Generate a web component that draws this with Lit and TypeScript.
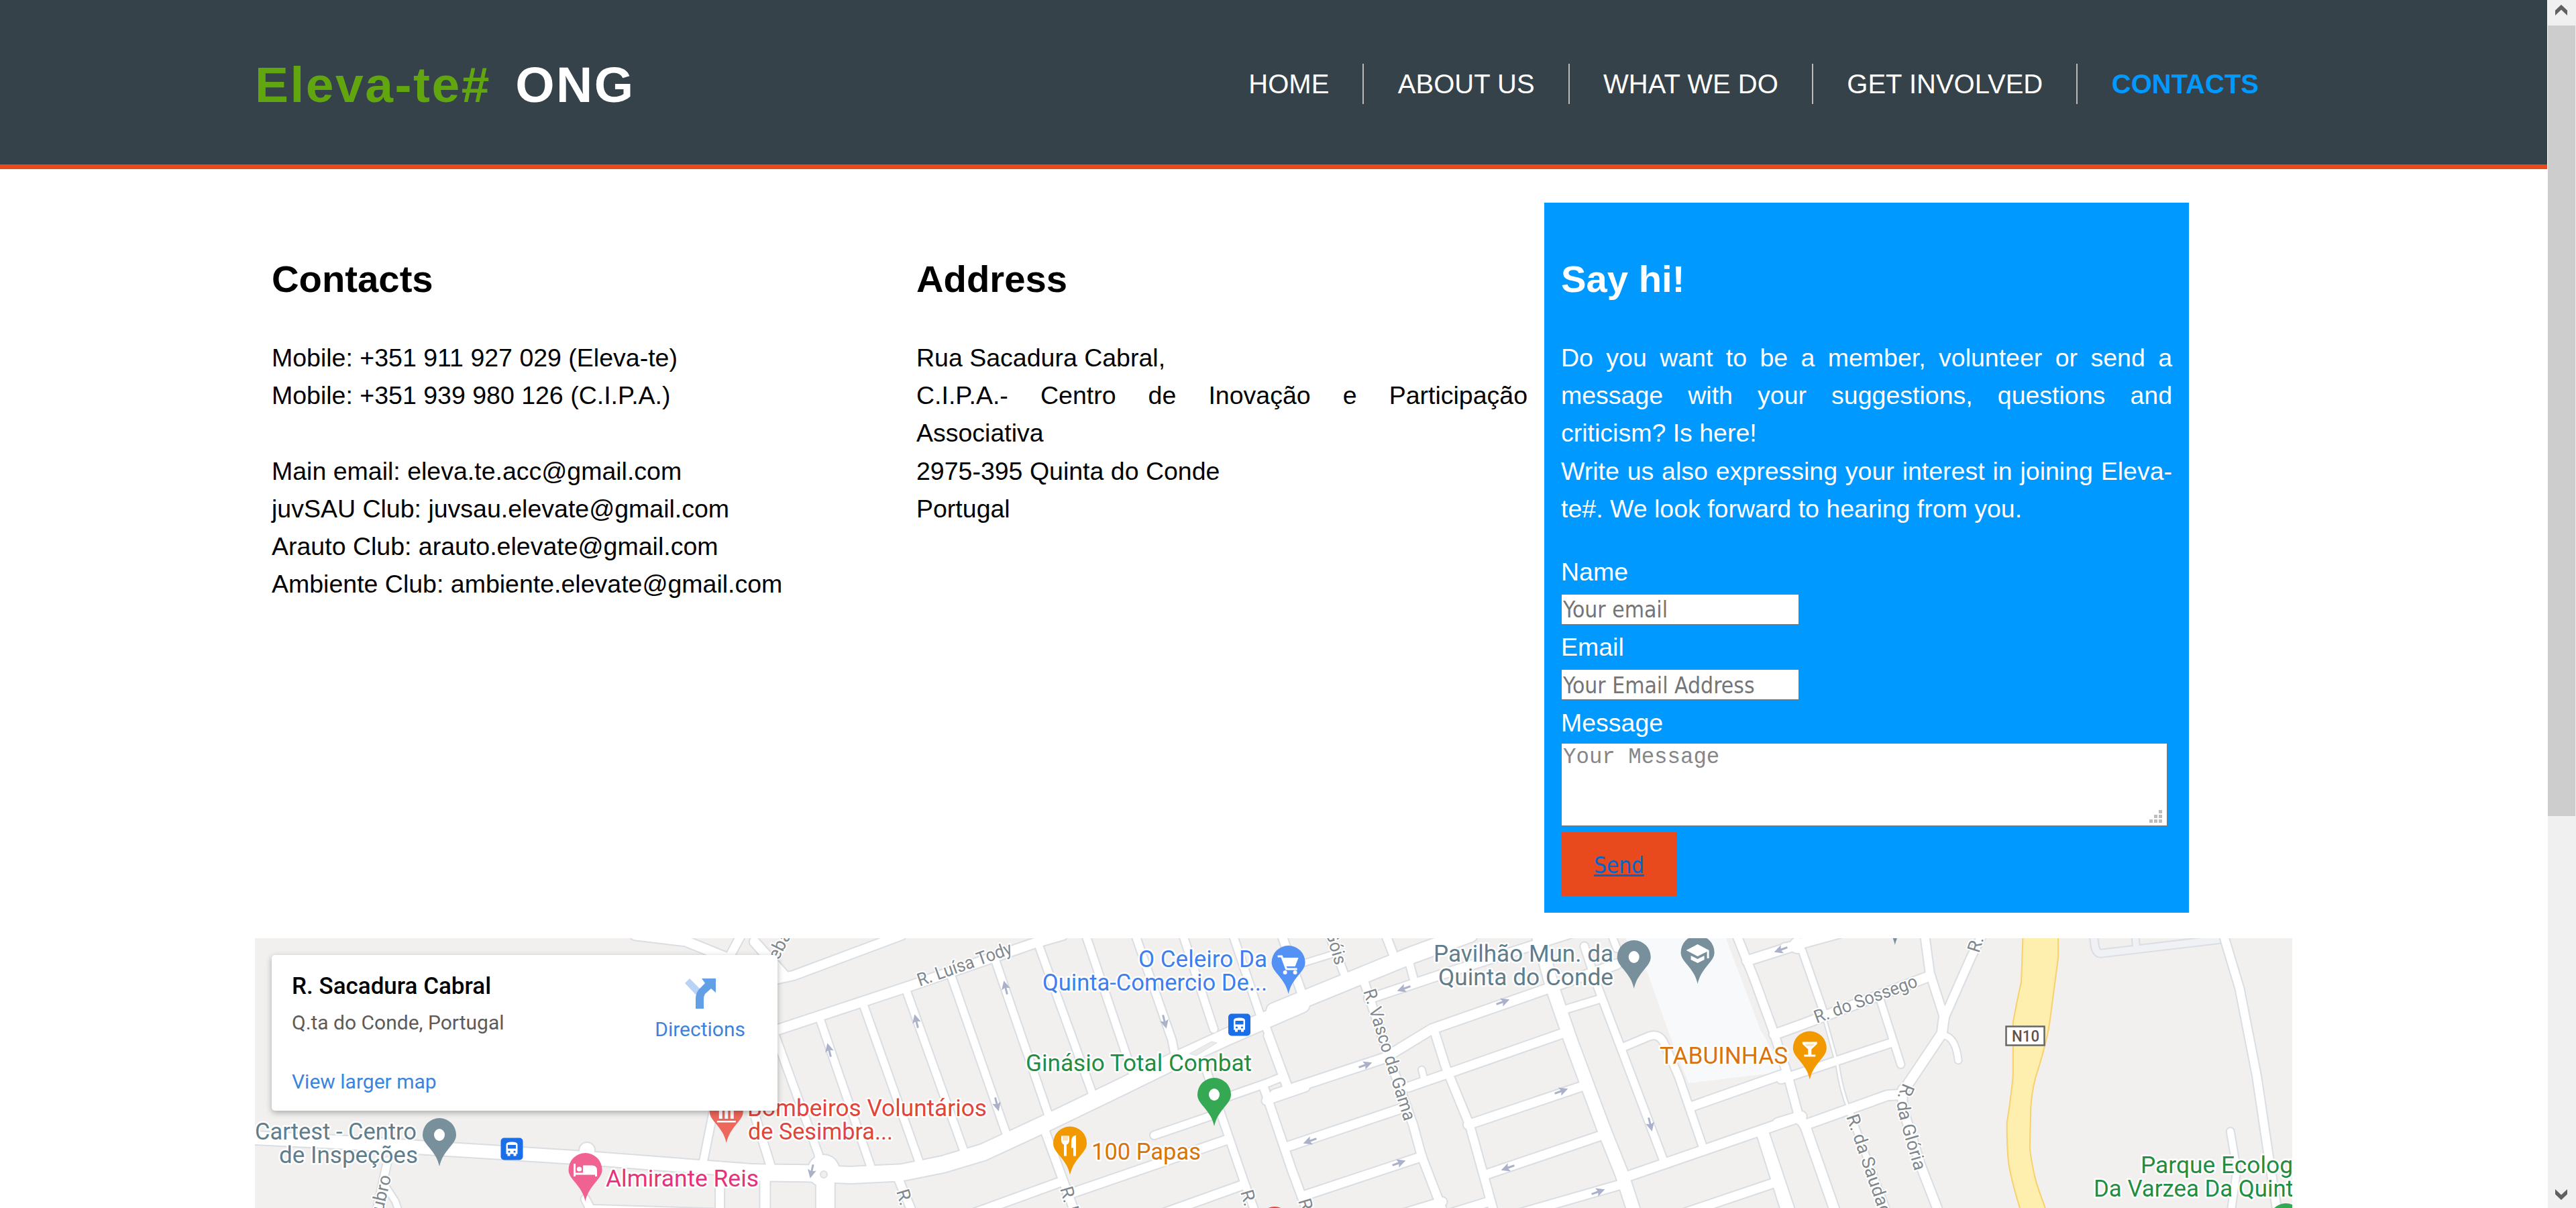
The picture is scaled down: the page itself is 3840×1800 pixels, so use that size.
import { LitElement, html, css, svg } from "lit";
import { customElement } from "lit/decorators.js";

/* ---------- map data ---------- */

const TILE_X = [370, 1140, 1900, 2660];
const tileTransform = (t: number) =>
  `translate(${TILE_X[t]} 1390) scale(0.510204 0.333333)`;

type Road = [tile: number, width: number, d: string];

const ROADS: Road[] = [
  // west
  [0, 14, "M1130 10L1280 38L1420 125"],
  [0, 12, "M1440 10L1405 110"],
  [0, 19, "M0 915L300 938L560 965L1000 1008L1568 1075"],
  [0, 11, "M407 1020L375 1245"],
  [0, 9, "M400 1130L430 1200L440 1245"],
  [0, 11, "M1360 790L1330 1020"],
  [0, 12, "M1475 790L1530 1060"],
  [0, 22, "M990 972V1010"],
  [0, 12, "M985 1190L1000 1235L1568 1262"],
  [0, 12, "M1378 1060V1245"],
  [0, 14, "M1510 1080V1245"],
  // centre west
  [1, 14, "M20 442L420 240L790 45L870 10"],
  [1, 13, "M-20 225L40 205L85 190L400 10"],
  [1, 14, "M-30 40L60 195"],
  [1, 11, "M0 330L33 470L157 990L160 1040"],
  [1, 11, "M161 385L312 1055"],
  [1, 11, "M288 320L455 1040"],
  [1, 11, "M413 255L583 980"],
  [1, 11, "M544 190L705 895"],
  [1, 11, "M673 120L828 810"],
  [1, 11, "M798 45L960 730"],
  [1, 11, "M938 10L1075 630"],
  [1, 11, "M1083 10L1190 480L1200 560"],
  [1, 11, "M1222 10L1312 430"],
  [1, 11, "M1368 10L1448 370"],
  [1, 11, "M1512 10L1575 290"],
  [1, 24, "M-30 1072L120 1075L250 1083L400 1072L520 1035L640 980L830 845L1040 690L1200 570L1350 465L1568 320"],
  [1, 46, "M172 1062V1066"],
  [1, 27, "M177 1070V1250"],
  [1, 12, "M385 1080L430 1245"],
  [1, 12, "M815 870L870 1100L905 1245"],
  [1, 11, "M1285 590L1335 820L1400 1110L1432 1245"],
  [1, 11, "M1330 745L1470 670L1510 645"],
  [1, 11, "M1462 410L1532 700"],
  [1, 12, "M1458 690L1540 1060L1585 1245"],
  [1, 12, "M1465 750L1580 690"],
  [1, 11, "M1138 905L1310 815"],
  [1, 13, "M600 1260L870 1110"],
  [1, 13, "M885 1170L1350 925"],
  [1, 13, "M1150 1262L1400 1125"],
  [1, 11, "M1535 955L1580 930"],
  // centre east
  [2, 24, "M0 350L240 200L400 100L570 5"],
  [2, 11, "M20 10L80 280"],
  [2, 8, "M75 140L170 95"],
  [2, 11, "M160 10L210 210"],
  [2, 12, "M325 10L350 110"],
  [2, 11, "M390 115L408 215"],
  [2, 13, "M275 295L470 195L870 0"],
  [2, 14, "M0 722L320 560L460 430L800 248L1000 140"],
  [2, 13, "M390 690L500 632L840 450"],
  [2, 13, "M35 957L380 780"],
  [2, 13, "M565 858L900 685"],
  [2, 13, "M80 1178L430 1000"],
  [2, 13, "M615 1082L950 908"],
  [2, 13, "M700 1262L1005 1128"],
  [2, 13, "M370 1258L490 1202"],
  [2, 13, "M520 1252L630 1200"],
  [2, 11, "M-20 460L38 700"],
  [2, 12, "M260 210L335 560L405 860L430 1000L492 1245"],
  [2, 12, "M465 430L500 600L570 860L640 1245"],
  [2, 9, "M430 612L438 660"],
  [2, 19, "M770 10L812 245L865 480L960 870L1015 1080L1050 1245"],
  [2, 11, "M905 60L945 245L1137 1020"],
  [2, 10, "M985 10L1000 70"],
  [2, 11, "M855 340L955 293"],
  [2, 11, "M1020 510L1095 462Q1125 445 1140 500L1180 640L1252 960"],
  [2, 14, "M1025 1092L1540 820"],
  [2, 13, "M1215 778L1490 630"],
  [2, 12, "M1350 10L1400 200L1455 430L1500 640L1535 840"],
  [2, 11, "M1418 890L1492 1245"],
  [2, 13, "M1180 1262L1465 1115"],
  [2, 14, "M1380 125L1535 50L1600 15"],
  // east
  [3, 14, "M-30 455L60 405L425 193"],
  [3, 22, "M38 55V57"],
  [3, 12, "M0 65L40 55L170 0"],
  [3, 10, "M52 80L118 370"],
  [3, 3.5, "M115 370L155 590Q165 700 190 795"],
  [3, 12, "M410 10L425 180L467 380"],
  [3, 12, "M578 10L545 110L467 380"],
  [3, 14, "M467 370L460 450L355 690"],
  [3, 9, "M465 458Q500 465 508 570"],
  [3, 10, "M280 300L340 588"],
  [3, 12, "M-10 655L315 490"],
  [3, 14, "M-20 850L40 822"],
  [3, 14, "M40 820L60 860L148 1245"],
  [3, 14, "M58 860L300 727L345 722"],
  [3, 13, "M345 700L345 780L398 1040L450 1245"],
  [3, 9, "M190 795L215 900L300 1245"],
  [3, 11, "M-60 880L20 1245"],
  [3, 12, "M1283 10L1330 250L1380 640L1415 1000L1440 1245"],
  [3, 10, "M1303 888L1322 1060L1305 1245"],
];

const FAINT_ROADS: Road[] = [
  [3, 10, "M903 10L907 60Q912 92 925 92L1280 28"],
  [3, 9, "M1025 10L1028 65"],
];

// x, y, heading in degrees
const ARROWS: [number, number, number][] = [
  [1236, 1565, -104], [1366, 1522, -104], [1499, 1472, -104],
  [1736, 1522, 76], [1486, 1645, 76], [1210, 1745, 102],
  [2093, 1473, 160], [2240, 1493, -20], [2035, 1587, -20],
  [1953, 1700, 160], [2085, 1733, -20], [2327, 1626, -20],
  [2248, 1740, 160], [2382, 1776, -20], [2460, 1675, 76], [2655, 1415, 160],
];

type Label = [x1: number, x2: number, y: number, color: string, text: string];
const SLATE = "#5f7d8b";
const LABELS: Label[] = [
  [380, 621, 1698, SLATE, "Cartest - Centro"],
  [416, 623, 1733, SLATE, "de Inspeções"],
  [903, 1131, 1768, "#e8317a", "Almirante Reis"],
  [1114, 1471, 1663, "#e0443a", "Bombeiros Voluntários"],
  [1115, 1331, 1698, "#e0443a", "de Sesimbra..."],
  [1529, 1866, 1596, "#1f8e43", "Ginásio Total Combat"],
  [1627, 1790, 1728, "#d8730d", "100 Papas"],
  [1697, 1889, 1441, "#3d7fec", "O Celeiro Da"],
  [1554, 1889, 1476, "#3d7fec", "Quinta-Comercio De..."],
  [2137, 2405, 1433, SLATE, "Pavilhão Mun. da"],
  [2144, 2405, 1468, SLATE, "Quinta do Conde"],
  [2474, 2665, 1585, "#d8730d", "TABUINHAS"],
  [3191, 3418, 1748, "#1f8e43", "Parque Ecolog"],
  [3121, 3419, 1783, "#1f8e43", "Da Varzea Da Quint"],
];

// x, y, angle, length (0 = natural), text
const STREETS: [number, number, number, number, string][] = [
  [1371, 1470, -19.5, 148, "R. Luísa Tody"],
  [1160, 1432, -63, 0, "eba"],
  [2032, 1477, 72.5, 204, "R. Vasco da Gama"],
  [1976, 1389, 74, 52, "Góis"],
  [1336, 1775, 74, 0, "R. S"],
  [1580, 1771, 74, 0, "R. F"],
  [1849, 1776, 74, 0, "R."],
  [1935, 1789, 74, 0, "R"],
  [2708, 1525, -20, 162, "R. do Sossego"],
  [2950, 1421, -72, 0, "R."],
  [2752, 1664, 71, 0, "R. da Saudade"],
  [571, 1806, -77, 0, "ubro"],
];

const dot = svg`<ellipse cx="0" cy="-47" rx="8" ry="9" fill="#fff"/>`;
const PINS: [number, number, string, unknown][] = [
  [655, 1738, "#78909c", dot],
  [872.5, 1790, "#f06292", svg`<path d="M-16 -56v19M-16 -41h32M16 -37v-9q0-6-6-6h-12v10" stroke="#fff" stroke-width="3" fill="none"/><circle cx="-9" cy="-48" r="3.6" fill="#fff"/><path d="M-3 -52h13q5 0 5 6v4H-3z" fill="#fff"/>`],
  [1082.8, 1703, "#ee675c", svg`<path d="M-14 -33h28v2.500h-28zM-11 -49h5v13h-5zM-2.500 -49h5v13h-5zM6 -49h5v13h-5zM-14 -56L0 -64l14 8v3h-28z" fill="#fff"/>`],
  [1920.6, 1481, "#5491f5", svg`<path d="M-16 -56h6l7 19h16" stroke="#fff" stroke-width="3" fill="none"/><path d="M-9 -54H15L10 -41H-4z" fill="#fff"/><circle cx="-5" cy="-32" r="3" fill="#fff"/><circle cx="10" cy="-32" r="3" fill="#fff"/>`],
  [1810, 1678, "#34a853", dot],
  [1595, 1750.500, "#f29900", svg`<path d="M-13 -58h12v6q0 6-4 7v17h-4v-17q-4-1-4-7z" fill="#fff"/><path d="M-11 -58h8v7h-8z" fill="#fbe0b0"/><path d="M9 -59v31h-4v-12h-3v-10q0-8 7-9z" fill="#fff"/>`],
  [2435.700, 1473, "#78909c", dot],
  [2530.600, 1466, "#78909c", svg`<path d="M0 -59L17 -50V-38h-3V-48L0 -41L-17 -50z" fill="#fff"/><path d="M-10 -42L0 -37L10 -42v6L0 -31l-10 -5z" fill="#fff"/>`],
  [2697.800, 1608.500, "#f29900", svg`<path d="M-11 -56h22v3L2.500 -45v8h6v3h-17v-3h6v-8L-11 -53z" fill="#fff"/><path d="M-7 -53h14l-2 3h-10z" fill="#fbe0b0"/>`],
  [2824.800, 1408, "#78909c", ""],
  [1900, 1870, "#dd4a3f", ""],
  [3407.500, 1865, "#34a853", ""],
];

const roadLines = (roads: Road[], cls: string, extra: number) =>
  roads.map(
    ([t, w, d]) =>
      svg`<path class=${cls} transform=${tileTransform(t)} d=${d} stroke-width=${w + extra}></path>`
  );

const bus = (x: number, y: number) => svg`
  <g transform="translate(${x} ${y})">
    <rect width="33" height="33" rx="5" fill="#1a6fe8"/>
    <path d="M8 10q0-4 8.500-4t8.500 4v14h-2v3h-4v-3h-5v3h-4v-3h-2z" fill="#fff"/>
    <rect x="10.500" y="10.500" width="12" height="5.500" fill="#1a6fe8"/>
    <circle cx="12.500" cy="20.500" r="1.600" fill="#1a6fe8"/>
    <circle cx="20.500" cy="20.500" r="1.600" fill="#1a6fe8"/>
  </g>`;

@customElement("site-map")
export class SiteMap extends LitElement {
  static styles = css`
    :host {
      display: block;
      position: relative;
      height: 402px;
      overflow: hidden;
      background: #f1f0ef;
      font-family: Roboto, sans-serif;
    }
    .canvas { display: block; width: 3037px; height: 402px; }
    .edge, .road, .faint { fill: none; vector-effect: non-scaling-stroke; stroke-linecap: round; stroke-linejoin: round; }
    .edge { stroke: #dadde1; }
    .road { stroke: #fff; }
    .faint { stroke: #eff1f4; }
    .poi { font-size: 35px; paint-order: stroke; stroke: #fff; stroke-width: 5px; stroke-linejoin: round; }
    .street { font-size: 27px; fill: #80878d; paint-order: stroke; stroke: #fff; stroke-width: 4px; stroke-linejoin: round; }
    .shield { font-size: 24px; font-weight: 500; fill: #555; }
    .card {
      position: absolute;
      left: 25px;
      top: 25px;
      width: 754px;
      height: 232px;
      box-sizing: border-box;
      padding: 27px 48px 0 30px;
      display: flex;
      justify-content: space-between;
      background: #fff;
      border-radius: 5px;
      box-shadow: 0 3px 10px rgba(0, 0, 0, 0.3);
      white-space: nowrap;
    }
    .place { display: flex; flex-direction: column; }
    .title { font-size: 35px; line-height: 40px; font-weight: 500; color: #000; }
    .address { font-size: 30px; line-height: 40px; color: #5b5b5b; margin-top: 14px; }
    .link { font-size: 30px; line-height: 40px; color: #3a84df; }
    .larger { margin-top: 48px; }
    .directions { display: flex; flex-direction: column; align-items: center; padding-top: 7px; }
    .turn { display: block; width: 46px; height: 46px; margin-bottom: 11px; }
  `;

  render() {
    return html`
      <svg class="canvas" viewBox="380 1398 3037 402">
        <path fill="#f8f9fb" transform=${tileTransform(2)} d="M1020 10H1315L1420 435L1490 620L1210 672L1155 460L1090 180z"></path>
        ${roadLines(FAINT_ROADS, "edge", 4)}${roadLines(FAINT_ROADS, "faint", 0)}
        ${roadLines(ROADS, "edge", 4)}${roadLines(ROADS, "road", 0)}
        <path d="M1773 1570l33-18 8 2-31 19z" fill="#ebebeb" stroke="#dcdfe3"></path>
        <circle cx="1228" cy="1750" r="5" fill="#f1f0ef" stroke="#dcdfe3" stroke-width="2"></circle>
        <path transform=${tileTransform(3)} vector-effect="non-scaling-stroke" fill="#ffefae" stroke="#f8d06c" stroke-width="2"
          d="M697 10L692 220Q680 300 668 400V640Q660 760 650 850Q650 960 655 1030Q665 1120 692 1250H767Q735 1120 730 1080Q720 1010 717 960L720 780Q722 720 733 650Q765 500 775 400L800 110V10z"></path>
        <g>
          <rect x="2990.500" y="1529.500" width="57" height="28" fill="#fff" stroke="#666" stroke-width="2.500"></rect>
          <text class="shield" x="2999" y="1552" textLength="41" lengthAdjust="spacingAndGlyphs">N10</text>
        </g>
        ${ARROWS.map(
          ([x, y, a]) =>
            svg`<path transform="translate(${x} ${y}) rotate(${a})" d="M-10 -1.500H0L-2 -6.500L11 0L-2 6.500L0 1.500H-10z" fill="#aab1c9"/>`
        )}
        ${STREETS.map(([x, y, a, len, t]) =>
          len
            ? svg`<text class="street" transform="translate(${x} ${y}) rotate(${a})" textLength=${len} lengthAdjust="spacingAndGlyphs">${t}</text>`
            : svg`<text class="street" transform="translate(${x} ${y}) rotate(${a})">${t}</text>`
        )}
        <path id="gloria" fill="none" d="M2837 1613L2827 1638L2829 1655L2838 1690L2852 1738L2862 1775"></path>
        <text class="street"><textPath href="#gloria">R. da Glória</textPath></text>
        ${LABELS.map(
          ([x1, x2, y, c, t]) =>
            svg`<text class="poi" x=${x1} y=${y} fill=${c} textLength=${x2 - x1} lengthAdjust="spacingAndGlyphs">${t}</text>`
        )}
        ${bus(746.5, 1695.5)}${bus(1831, 1510.5)}
        ${PINS.map(
          ([x, y, c, glyph]) => svg`
          <g transform="translate(${x} ${y})">
            <path d="M0 0C-3 -13 -8 -19 -15 -28C-21 -35 -25 -40 -25 -47A25 25 0 0 1 25 -47C25 -40 21 -35 15 -28C8 -19 3 -13 0 0z" fill=${c}/>
            ${glyph}
          </g>`
        )}
      </svg>
      <div class="card">
        <div class="place">
          <span class="title">R. Sacadura Cabral</span>
          <span class="address">Q.ta do Conde, Portugal</span>
          <span class="link larger">View larger map</span>
        </div>
        <div class="directions">
          <svg class="turn" viewBox="0 0 46 46">
            <path d="M7 1L0 8L16 25L23 17z" fill="#b9d3f5"></path>
            <path d="M16 46V31Q16 23 21 17L30 8L25 1H46V22L39 16L30 24Q28 27 28 32V46z" fill="#629fe6"></path>
          </svg>
          <span class="link">Directions</span>
        </div>
      </div>
    `;
  }
}

@customElement("app-root")
export class AppRoot extends LitElement {
  static styles = css`
    :host {
      display: flex;
      width: 3840px;
      height: 1800px;
      overflow: hidden;
      background: #fff;
      font-family: "Liberation Sans", Arial, sans-serif;
      font-size: 37.5px;
      line-height: 56.25px;
      color: #000;
    }
    .page { width: 3797px; height: 1800px; overflow: hidden; margin-right: 1px; }
    .header {
      height: 245px;
      box-sizing: content-box;
      padding: 0 380px;
      background: #35424a;
      border-bottom: 7px solid #e8491d;
      display: flex;
      justify-content: space-between;
      align-items: center;
      color: #fff;
    }
    .brand { margin: 7px 0 0; font-size: 75px; line-height: 112px; letter-spacing: 2.5px; white-space: pre; font-weight: 700; }
    .green { color: #62a60f; margin-right: 13px; }
    .nav { display: flex; margin-top: 5px; font-size: 40px; line-height: 60px; }
    .item { padding: 0 50px; border-right: 2px solid #bbb; margin-right: 0.5px; white-space: nowrap; }
    .item:last-child { border-right: 0; margin-right: 0; }
    .current { color: #0099ff; font-weight: 700; }
    .columns { display: flex; margin: 50px 0 0 380px; height: 1058px; }
    .column { width: 961px; box-sizing: border-box; padding: 25px; }
    .hello { background: #0099ff; color: #fff; }
    .heading { margin: 46.7px 0; font-size: 56.25px; line-height: 84.4px; font-weight: 700; }
    .text { margin: 0 0 37.5px; text-align: justify; }
    .form { display: flex; flex-direction: column; align-items: flex-start; }
    .field, .area {
      box-sizing: border-box;
      margin: 0;
      padding: 2px;
      border: 1px solid #767676;
      border-radius: 0;
      background: #fff;
      outline: 0;
    }
    .field {
      width: 355px;
      height: 46px;
      margin: 5px 0 5.25px;
      padding-top: 4px;
      font: 33.4px "DejaVu Sans Condensed", "DejaVu Sans", sans-serif;
      font-stretch: condensed;
    }
    .field::placeholder { color: #757575; opacity: 1; }
    .area::placeholder { color: #868686; opacity: 1; }
    .wrap { position: relative; display: flex; margin: 2px 0 9px; }
    .area {
      width: 904px;
      height: 124px;
      padding: 2px;
      resize: none;
      font: 32.4px/37px "Liberation Mono", "Courier New", monospace;
    }
    .grip { position: absolute; right: 8px; bottom: 5px; width: 19px; height: 19px; }
    .send {
      width: 173px;
      height: 95px;
      box-sizing: border-box;
      padding-top: 4px;
      border-radius: 2px;
      background: #e8491d;
      color: #0066cc;
      font: 33px/92px "DejaVu Sans Condensed", "DejaVu Sans", sans-serif;
      font-stretch: condensed;
      text-align: center;
      text-decoration: underline;
    }
    .map { margin: 38px 0 0 380px; width: 3037px; }
    .scrollbar { width: 42px; height: 1800px; background: #f0f0f0; display: flex; flex-direction: column; justify-content: space-between; }
    .step { display: block; width: 42px; height: 38px; }
    .track { flex: 1; }
    .thumb { width: 41px; height: 1178px; background: #cdcdcd; }
  `;

  render() {
    return html`
      <div class="page">
        <header class="header">
          <h1 class="brand"><span class="green">Eleva-te#</span> ONG</h1>
          <nav class="nav">
            ${["HOME", "ABOUT US", "WHAT WE DO", "GET INVOLVED"].map(
              (t) => html`<span class="item">${t}</span>`
            )}<span class="item current">CONTACTS</span>
          </nav>
        </header>
        <section class="columns">
          <div class="column">
            <h2 class="heading">Contacts</h2>
            <p class="text">
              Mobile: +351 911 927 029 (Eleva-te)<br />Mobile: +351 939 980 126 (C.I.P.A.)<br /><br />Main email:
              eleva.te.acc@gmail.com<br />juvSAU Club: juvsau.elevate@gmail.com<br />Arauto Club:
              arauto.elevate@gmail.com<br />Ambiente Club: ambiente.elevate@gmail.com
            </p>
          </div>
          <div class="column">
            <h2 class="heading">Address</h2>
            <p class="text">
              Rua Sacadura Cabral,<br />C.I.P.A.- Centro de Inovação e Participação Associativa<br />2975-395 Quinta
              do Conde<br />Portugal
            </p>
          </div>
          <div class="column hello">
            <h2 class="heading">Say hi!</h2>
            <p class="text">
              Do you want to be a member, volunteer or send a message with your suggestions, questions and criticism?
              Is here!<br />Write us also expressing your interest in joining Eleva-te#. We look forward to hearing
              from you.
            </p>
            <div class="form">
              <label>Name</label>
              <input class="field" placeholder="Your email" />
              <label>Email</label>
              <input class="field" placeholder="Your Email Address" />
              <label>Message</label>
              <div class="wrap">
                <textarea class="area" placeholder="Your Message"></textarea>
                <svg class="grip" viewBox="0 0 19 19" fill="#bdbdbd">
                  <path d="M14 0h5v5h-5zM7 7h5v5H7zM14 7h5v5h-5zM0 14h5v5H0zM7 14h5v5H7zM14 14h5v5h-5z"></path>
                </svg>
              </div>
              <div class="send">Send</div>
            </div>
          </div>
        </section>
        <site-map class="map"></site-map>
      </div>
      <div class="scrollbar">
        <svg class="step" viewBox="0 0 42 38"><path d="M11 15.500L20 7L29 15.500V23L20 14.500L11 23z" fill="#606060"></path></svg>
        <div class="track"><div class="thumb"></div></div>
        <svg class="step" viewBox="0 0 42 38"><path d="M11 10L20 18.500L29 10V17.500L20 26L11 17.500z" fill="#606060"></path></svg>
      </div>
    `;
  }
}
